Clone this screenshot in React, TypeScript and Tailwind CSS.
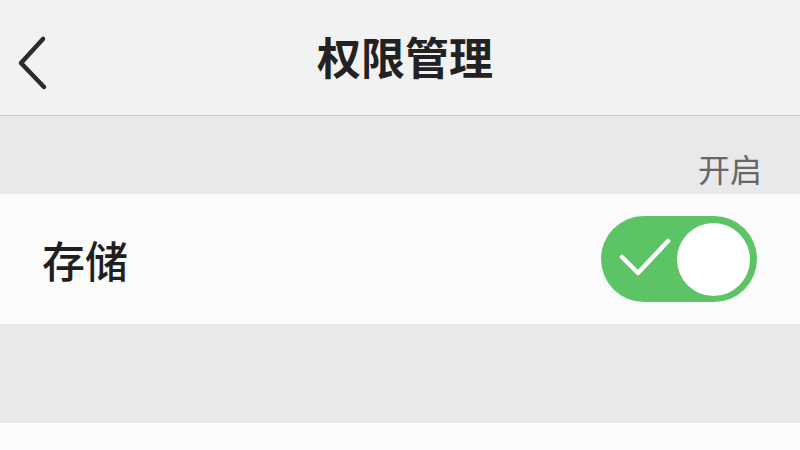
export default function App() {
  return (
    <div
      className="w-[800px] h-[450px] overflow-hidden bg-[#e9e9ec] flex flex-col"
      style={{ fontFamily: '"Noto Sans CJK SC", "Noto Sans", sans-serif' }}
    >
      {/* Top bar */}
      <header className="relative h-[116px] shrink-0 bg-[#f2f2f2] border-b border-[#c9c9cb] flex items-center justify-center">
        <button className="absolute left-[14px] top-[34px] w-[40px] h-[60px] flex items-center justify-center">
          <svg width="40" height="60" viewBox="0 0 40 60" fill="none">
            <path
              d="M29 5 L7 29 L30 53"
              stroke="#2a2a2a"
              strokeWidth="4.5"
              strokeLinecap="round"
              strokeLinejoin="round"
            />
          </svg>
        </button>
        <h1 className="text-[44px] font-bold text-[#222] leading-none pl-[10px] pb-[4px]">权限管理</h1>
      </header>

      {/* Section caption */}
      <div className="h-[78px] shrink-0 flex items-end justify-end pr-[38px] pb-[10px]">
        <span className="text-[32px] text-[#666] leading-none">开启</span>
      </div>

      {/* Storage permission row */}
      <div className="h-[130px] shrink-0 bg-[#fbfbfb] flex items-center justify-between pl-[42px] pr-[43px]">
        <span className="text-[43px] font-medium text-[#1f1f1f] leading-none">存储</span>
        <div className="w-[156px] h-[86px] rounded-full bg-[#5cc465] flex items-center justify-end pr-[7px] relative">
          <svg className="absolute left-[17px] top-[22px]" width="54" height="40" viewBox="0 0 54 40" fill="none">
            <path
              d="M4 19 L20 35 L50 3"
              stroke="#ffffff"
              strokeWidth="4.5"
              strokeLinecap="round"
              strokeLinejoin="round"
            />
          </svg>
          <div className="w-[73px] h-[73px] rounded-full bg-white" />
        </div>
      </div>

      <div className="h-[99px] shrink-0" />

      <div className="flex-1 bg-[#fbfbfb]" />
    </div>
  );
}
